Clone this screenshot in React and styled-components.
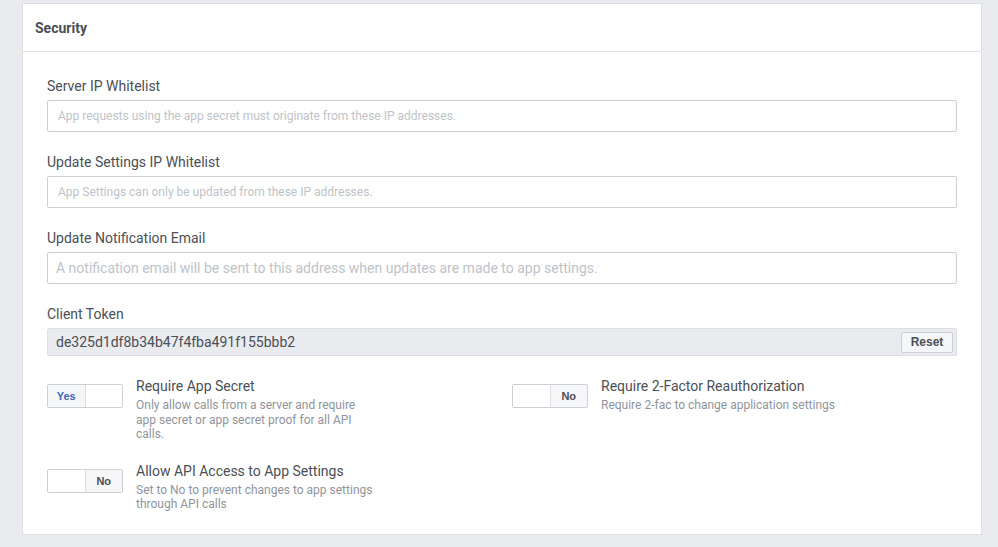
import React from "react";
import styled, { createGlobalStyle } from "styled-components";

const GlobalStyle = createGlobalStyle`
  body {
    margin: 0;
    background: #e9ebee;
    font-family: Roboto, "Liberation Sans", Arial, sans-serif;
    color: #4b4f56;
  }
  * { box-sizing: border-box; }
`;

const fields = [
  {
    label: "Server IP Whitelist",
    placeholder: "App requests using the app secret must originate from these IP addresses.",
    small: true,
  },
  {
    label: "Update Settings IP Whitelist",
    placeholder: "App Settings can only be updated from these IP addresses.",
    small: true,
  },
  {
    label: "Update Notification Email",
    placeholder: "A notification email will be sent to this address when updates are made to app settings.",
    small: false,
  },
];

const Toggle = ({ on }) => (
  <ToggleBox>
    <Segment $active={on} $yes>{on ? "Yes" : ""}</Segment>
    <Segment $active={!on}>{on ? "" : "No"}</Segment>
  </ToggleBox>
);

const Setting = ({ on, title, desc }) => (
  <SettingRow>
    <Toggle on={on} />
    <SettingText>
      <SettingTitle>{title}</SettingTitle>
      <SettingDesc>{desc}</SettingDesc>
    </SettingText>
  </SettingRow>
);

const App = () => {
  return (
    <>
      <GlobalStyle />
      <Card>
        <Header>Security</Header>
        <Body>
          {fields.map((f) => (
            <Field key={f.label}>
              <Label>{f.label}</Label>
              <TextInput $small={f.small} placeholder={f.placeholder} />
            </Field>
          ))}
          <Field>
            <Label>Client Token</Label>
            <Token>
              <span>de325d1df8b34b47f4fba491f155bbb2</span>
              <ResetButton>Reset</ResetButton>
            </Token>
          </Field>
          <SettingsGrid>
            <Setting
              on
              title="Require App Secret"
              desc="Only allow calls from a server and require app secret or app secret proof for all API calls."
            />
            <Setting
              title="Require 2-Factor Reauthorization"
              desc="Require 2-fac to change application settings"
            />
            <Setting
              title="Allow API Access to App Settings"
              desc="Set to No to prevent changes to app settings through API calls"
            />
          </SettingsGrid>
        </Body>
      </Card>
    </>
  );
};

export default App;

const Card = styled.div`
  margin: 3px 0 0 22px;
  width: 960px;
  background: #fff;
  border: 1px solid #dddfe2;
`;

const Header = styled.div`
  height: 48px;
  padding-left: 12px;
  display: flex;
  align-items: center;
  border-bottom: 1px solid #dddfe2;
  font-weight: bold;
  font-size: 14px;
  color: #4b4f56;
`;

const Body = styled.div`
  padding: 24px 24px 22px;
  display: flex;
  flex-direction: column;
  gap: 20px;
`;

const Field = styled.div`
  display: flex;
  flex-direction: column;
`;

const Label = styled.div`
  font-size: 14px;
  line-height: 20px;
  margin-bottom: 4px;
  color: #4b4f56;
`;

const TextInput = styled.input`
  height: 32px;
  width: 100%;
  border: 1px solid #ccd0d5;
  border-radius: 2px;
  padding: 0 ${(p) => (p.$small ? "10px" : "8px")};
  font-family: Roboto, "Liberation Sans", sans-serif;
  font-size: ${(p) => (p.$small ? "12px" : "14px")};
  outline: none;
  &::placeholder {
    color: #bec3c9;
  }
`;

const Token = styled.div`
  height: 28px;
  background: #e9ebee;
  border: 1px solid #dddfe2;
  border-radius: 2px;
  display: flex;
  align-items: center;
  justify-content: space-between;
  padding: 0 3px 0 8px;
  font-size: 14px;
  color: #4b4f56;
`;

const ResetButton = styled.button`
  height: 21px;
  width: 52px;
  padding: 0;
  background: #f5f6f7;
  border: 1px solid #ccd0d5;
  border-radius: 2px;
  font-family: "Liberation Sans", Arial, sans-serif;
  font-weight: bold;
  font-size: 12px;
  color: #4b4f56;
`;

const SettingsGrid = styled.div`
  margin-top: 1px;
  display: grid;
  grid-template-columns: 445px 445px;
  column-gap: 20px;
  row-gap: 20px;
`;

const SettingRow = styled.div`
  display: flex;
  align-items: flex-start;
  gap: 13px;
`;

const ToggleBox = styled.div`
  margin-top: 7px;
  width: 76px;
  height: 24px;
  display: flex;
  border: 1px solid #ccd0d5;
  border-radius: 2px;
  flex-shrink: 0;
`;

const Segment = styled.div`
  flex: 1;
  display: flex;
  align-items: center;
  justify-content: center;
  background: ${(p) => (p.$active ? "#f5f6f7" : "#fff")};
  border-left: ${(p) => (p.$yes ? "none" : "1px solid #dddfe2")};
  font-family: "Liberation Sans", Arial, sans-serif;
  font-weight: bold;
  font-size: 11px;
  color: ${(p) => (p.$yes ? "#4267b2" : "#4b4f56")};
`;

const SettingText = styled.div`
  max-width: 240px;
`;

const SettingTitle = styled.div`
  font-size: 14px;
  line-height: 19px;
  color: #4b4f56;
`;

const SettingDesc = styled.div`
  margin-top: 2px;
  font-size: 12px;
  line-height: 14.5px;
  color: #90949c;
`;
